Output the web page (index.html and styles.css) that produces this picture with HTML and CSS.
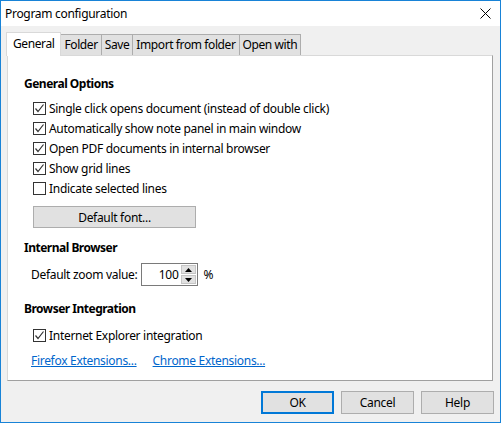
FILE: index.html
```html
<!DOCTYPE html>
<html>
<head>
<meta charset="utf-8">
<link rel="stylesheet" href="styles.css">
</head>
<body>
<div class="window">
  <div class="titlebar">
    <span class="title">Program configuration</span>
    <svg class="close" width="11" height="11" viewBox="0 0 11 11"><path d="M0.5 0.5 L10.5 10.5 M10.5 0.5 L0.5 10.5" stroke="#000" stroke-width="1" fill="none"/></svg>
  </div>
  <div class="tabs">
    <div class="tab active">General</div>
    <div class="tab">Folder</div>
    <div class="tab">Save</div>
    <div class="tab">Import from folder</div>
    <div class="tab">Open with</div>
  </div>
  <div class="panel">
    <div class="heading h1">General Options</div>
    <div class="checks">
      <label class="check"><span class="box"><svg width="11" height="11" viewBox="0 0 11 11"><path d="M1.5 5.5 L4 8.5 L9.5 1.5" stroke="#333" stroke-width="1.2" fill="none"/></svg></span>Single click opens document (instead of double click)</label>
      <label class="check"><span class="box"><svg width="11" height="11" viewBox="0 0 11 11"><path d="M1.5 5.5 L4 8.5 L9.5 1.5" stroke="#333" stroke-width="1.2" fill="none"/></svg></span>Automatically show note panel in main window</label>
      <label class="check"><span class="box"><svg width="11" height="11" viewBox="0 0 11 11"><path d="M1.5 5.5 L4 8.5 L9.5 1.5" stroke="#333" stroke-width="1.2" fill="none"/></svg></span>Open PDF documents in internal browser</label>
      <label class="check"><span class="box"><svg width="11" height="11" viewBox="0 0 11 11"><path d="M1.5 5.5 L4 8.5 L9.5 1.5" stroke="#333" stroke-width="1.2" fill="none"/></svg></span>Show grid lines</label>
      <label class="check"><span class="box"></span>Indicate selected lines</label>
    </div>
    <div class="btn fontbtn">Default font...</div>
    <div class="heading h2">Internal Browser</div>
    <div class="zoomrow">
      <span>Default zoom value:</span>
      <div class="spin">
        <span class="val">100</span>
        <div class="arrows">
          <div class="arr"><svg width="7" height="4" viewBox="0 0 7 4"><path d="M3.5 0 L7 4 L0 4 Z" fill="#000"/></svg></div>
          <div class="arr"><svg width="7" height="4" viewBox="0 0 7 4"><path d="M0 0 L7 0 L3.5 4 Z" fill="#000"/></svg></div>
        </div>
      </div>
      <span class="pct">%</span>
    </div>
    <div class="heading h3">Browser Integration</div>
    <label class="check ie"><span class="box"><svg width="11" height="11" viewBox="0 0 11 11"><path d="M1.5 5.5 L4 8.5 L9.5 1.5" stroke="#333" stroke-width="1.2" fill="none"/></svg></span>Internet Explorer integration</label>
    <div class="links">
      <a class="link">Firefox Extensions...</a>
      <a class="link">Chrome Extensions...</a>
    </div>
  </div>
  <div class="buttons">
    <div class="btn dlg default">OK</div>
    <div class="btn dlg">Cancel</div>
    <div class="btn dlg">Help</div>
  </div>
</div>
</body>
</html>
```
FILE: styles.css
```css
html, body {
  margin: 0;
  padding: 0;
}
body {
  font-family: "Noto Sans", "DejaVu Sans", sans-serif;
  font-size: 12px;
  letter-spacing: -0.3px;
  color: #000;
}
.window {
  width: 501px;
  height: 423px;
  box-sizing: border-box;
  border: 1px solid #1883d7;
  background: #f0f0f0;
  display: flex;
  flex-direction: column;
}
.titlebar {
  height: 25px;
  background: #fff;
  display: flex;
  align-items: center;
  justify-content: space-between;
  padding: 0 9px 0 4px;
}
.title {
  font-size: 12px;
}
.tabs {
  display: flex;
  align-items: flex-end;
  height: 23px;
  margin-top: 6px;
  padding-left: 5px;
}
.tab {
  height: 21px;
  box-sizing: border-box;
  border: 1px solid #adadad;
  border-bottom: none;
  background: #e1e1e1;
  padding: 0 3px;
  line-height: 20px;
  margin-left: -1px;
  letter-spacing: -0.4px;
}
.tab.active {
  height: 24px;
  background: #fff;
  border-color: #d9d9d9;
  padding: 0 6px;
  margin-left: 0;
  margin-bottom: -1px;
  position: relative;
  z-index: 1;
  line-height: 22px;
}
.tab.active + .tab {
  margin-left: -1px;
}
.panel {
  height: 326px;
  box-sizing: border-box;
  margin: 0 7px 0 6px;
  background: #fff;
  border: 1px solid #d9d9d9;
  border-right-color: #a0a0a0;
  border-bottom-color: #a0a0a0;
  padding-left: 16px;
  display: flex;
  flex-direction: column;
}
.heading {
  font-weight: bold;
  line-height: 20px;
  letter-spacing: -0.5px;
}
.h1 { margin-top: 18px; }
.h2 { margin-top: 10px; }
.h3 { margin-top: 13px; }
.checks {
  margin-top: 4px;
  display: flex;
  flex-direction: column;
  padding-left: 9px;
}
.check {
  display: flex;
  align-items: center;
  height: 20px;
}
.box {
  width: 13px;
  height: 13px;
  box-sizing: border-box;
  border: 1px solid #333;
  background: #fff;
  margin-right: 3px;
  display: flex;
  align-items: center;
  justify-content: center;
}
.btn {
  box-sizing: border-box;
  border: 1px solid #adadad;
  background: #e1e1e1;
  display: flex;
  align-items: center;
  justify-content: center;
}
.fontbtn {
  margin-top: 8px;
  margin-left: 9px;
  width: 163px;
  height: 22px;
}
.zoomrow {
  margin-top: 5px;
  margin-left: 7px;
  height: 23px;
  display: flex;
  align-items: center;
}
.spin {
  margin-left: 4px;
  width: 57px;
  height: 23px;
  box-sizing: border-box;
  border: 1px solid #7a7a7a;
  display: flex;
  align-items: center;
  justify-content: flex-end;
  padding-right: 1px;
}
.val {
  margin-right: 3px;
}
.arrows {
  display: flex;
  flex-direction: column;
  gap: 1px;
}
.arr {
  width: 15px;
  height: 9px;
  background: #e1e1e1;
  border: 1px solid #c5c5c5;
  box-sizing: border-box;
  display: flex;
  align-items: center;
  justify-content: center;
}
.pct {
  margin-left: 5px;
}
.check.ie {
  margin-top: 6px;
  margin-left: 9px;
}
.links {
  margin-top: 5px;
  margin-left: 7px;
  height: 20px;
  display: flex;
  align-items: center;
  gap: 16px;
}
.link {
  color: #0066cc;
  text-decoration: underline;
}
.buttons {
  display: flex;
  justify-content: flex-end;
  gap: 7px;
  margin-top: 10px;
  padding-right: 6px;
}
.dlg {
  width: 73px;
  height: 23px;
}
.dlg.default {
  border: 2px solid #0078d7;
}
```
